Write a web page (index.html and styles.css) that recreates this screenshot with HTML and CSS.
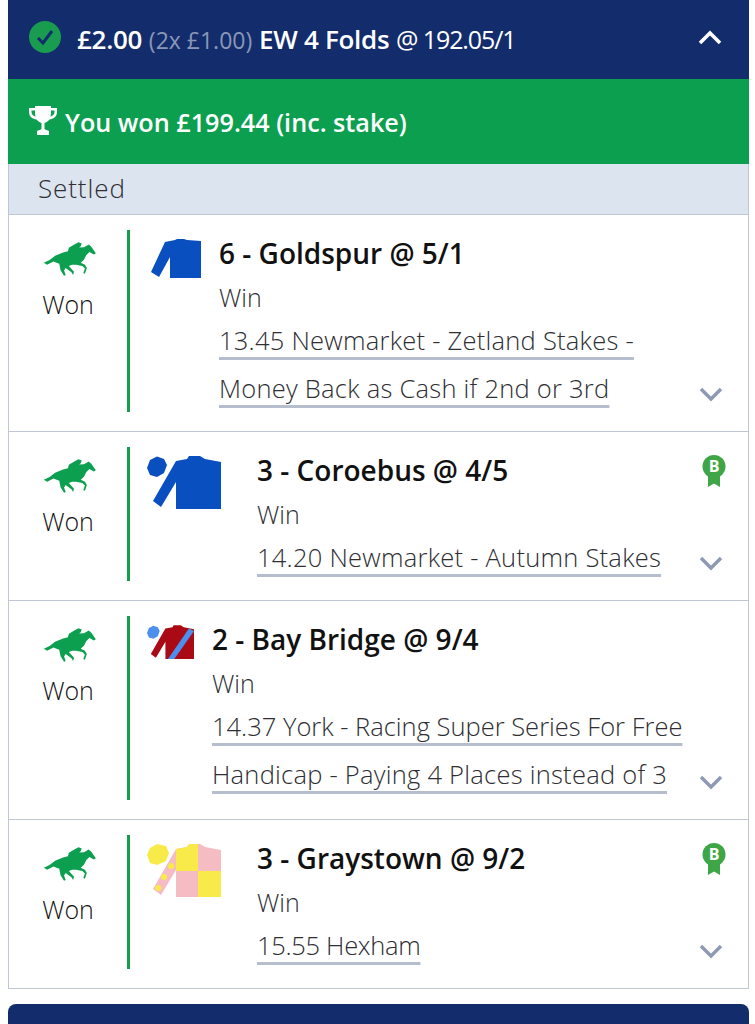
FILE: index.html
```html
<!DOCTYPE html>
<html lang="en">
<head>
<meta charset="utf-8">
<title>EW 4 Folds</title>
<link rel="stylesheet" href="styles.css">
</head>
<body>
<svg class="defs" width="0" height="0" aria-hidden="true">
  <symbol id="horse" viewBox="40 47 163 106">
    <path d="M40 112 L58 103 L75 90 L100 80 L115 76 L118 65 L135 55 L148 48 L158 52 L155 60 L150 64 L165 63 L180 55 L188 62 L202 82 L196 86 L182 78 L172 88 L165 102 L155 112 L168 118 L174 128 L168 146 L163 144 L168 130 L160 122 L140 118 L128 118 L118 122 L134 140 L131 150 L126 141 L108 128 L103 136 L108 150 L103 152 L92 135 L88 115 L70 108 L50 118 Z"/>
  </symbol>
  <symbol id="chev" viewBox="0 0 24 16">
    <path d="M2 3 L12 13 L22 3" fill="none" stroke-width="3.4"/>
  </symbol>
</svg>

<section class="card">
  <header class="head">
    <svg class="tick" viewBox="0 0 32 32"><circle cx="16" cy="16" r="16" class="tick-disc"/><path d="M9 17 L14 22 L23 10" class="tick-mark"/></svg>
    <h1 class="head-text"><b>£2.00</b> <span class="head-sub">(2x £1.00)</span> <b>EW 4 Folds</b> <span class="head-odds">@ 192.05/1</span></h1>
    <svg class="head-chev" viewBox="0 0 24 16"><path d="M2 13 L12 3 L22 13"/></svg>
  </header>
  <div class="won">
    <svg class="trophy" viewBox="0 0 28 29"><path d="M6 0 H22 V2 H28 V6 C28 11 24 13 20.500 13.500 C19 15.500 17 16.500 15.500 17 V23 C17 24 19 24.500 20 25 V29 H8 V25 C9 24.500 11 24 12.500 23 V17 C11 16.500 9 15.500 7.500 13.500 C4 13 0 11 0 6 V2 H6 Z M2.500 4.500 V6 C2.500 8.500 4.500 10 6.500 10.700 C6 9 6 6.500 6 4.500 Z M25.500 4.500 H22 C22 6.500 22 9 21.500 10.700 C23.500 10 25.500 8.500 25.500 6 Z"/></svg>
    <span>You won £199.44 (inc. stake)</span>
  </div>
  <div class="settled">Settled</div>

  <article class="leg">
    <div class="status"><svg class="horse"><use href="#horse"/></svg><span>Won</span></div>
    <div class="rule"></div>
    <div class="silk silk-plain">
      <svg viewBox="0 0 50 39"><path class="blue" d="M14 3 L24 1 L26 0 L33 0 L36 1 L50 2 L50 39 L19 39 L19 18 L8 38 L0 33 Z"/></svg>
    </div>
    <div class="info">
      <h2>6 - Goldspur @ 5/1</h2>
      <p class="market">Win</p>
      <p class="race"><a href="#">13.45 Newmarket - Zetland Stakes - Money Back as Cash if 2nd or 3rd</a></p>
    </div>
    <div class="side"><span></span><svg class="chev"><use href="#chev"/></svg></div>
  </article>

  <article class="leg">
    <div class="status"><svg class="horse"><use href="#horse"/></svg><span>Won</span></div>
    <div class="rule"></div>
    <div class="silk silk-large">
      <svg viewBox="0 0 74 54"><path class="blue" d="M10 0.500 L17 3 L20 9 L17 17 L10 21 L3 19 L0 12 L3 4 Z"/><path class="blue" d="M29 5 L40 3 L42 0 L53 0 L58 3 L74 6 V53 H29 V26 L14 51 L6 45 Z"/></svg>
    </div>
    <div class="info">
      <h2>3 - Coroebus @ 4/5</h2>
      <p class="market">Win</p>
      <p class="race"><a href="#">14.20 Newmarket - Autumn Stakes</a></p>
    </div>
    <div class="side">
      <svg class="badge" viewBox="0 0 24 32"><path d="M6 20 H18 V32 L12 28.500 L6 32 Z"/><circle cx="12" cy="11.500" r="11.500"/><text x="12" y="17" class="badge-letter">B</text></svg>
      <svg class="chev"><use href="#chev"/></svg>
    </div>
  </article>

  <article class="leg">
    <div class="status"><svg class="horse"><use href="#horse"/></svg><span>Won</span></div>
    <div class="rule"></div>
    <div class="silk silk-small">
      <svg viewBox="0 0 74 54"><path class="sky" d="M10 0.500 L17 3 L20 9 L17 17 L10 21 L3 19 L0 12 L3 4 Z"/><path class="maroon" d="M29 5 L40 3 L42 0 L53 0 L58 3 L74 6 V53 H29 V26 L14 51 L6 45 Z"/><path class="sky" d="M66 5 L74 9 L43 53 H33 Z"/></svg>
    </div>
    <div class="info info-tall">
      <h2>2 - Bay Bridge @ 9/4</h2>
      <p class="market">Win</p>
      <p class="race"><a href="#"><span class="tight">14.37 York - Racing Super Series For Free</span> Handicap - Paying 4 Places instead of 3</a></p>
    </div>
    <div class="side"><span></span><svg class="chev"><use href="#chev"/></svg></div>
  </article>

  <article class="leg">
    <div class="status"><svg class="horse"><use href="#horse"/></svg><span>Won</span></div>
    <div class="rule"></div>
    <div class="silk silk-large">
      <svg viewBox="0 0 74 54"><path class="yellow" d="M10 0 L19 2 L22 9 L19 17 L10 21 L3 19 L0 11 L3 4 Z"/><path class="pink" d="M29 5 L40 3 L42 0 L53 0 L58 3 L74 6 V53 H29 V26 L14 51 L6 45 Z"/><path class="yellow" d="M29 5 L40 3 L42 0 L51 0 V27 H29 Z M51 27 H74 V53 H51 Z"/><circle class="yellow" cx="24" cy="22" r="3"/><circle class="yellow" cx="17" cy="33" r="3"/><circle class="yellow" cx="11" cy="44" r="3"/></svg>
    </div>
    <div class="info">
      <h2>3 - Graystown @ 9/2</h2>
      <p class="market">Win</p>
      <p class="race"><a href="#" class="hexham">15.55 Hexham</a></p>
    </div>
    <div class="side">
      <svg class="badge" viewBox="0 0 24 32"><path d="M6 20 H18 V32 L12 28.500 L6 32 Z"/><circle cx="12" cy="11.500" r="11.500"/><text x="12" y="17" class="badge-letter">B</text></svg>
      <svg class="chev"><use href="#chev"/></svg>
    </div>
  </article>
</section>

<div class="next"></div>
</body>
</html>
```
FILE: styles.css
```css
* { box-sizing: border-box; }
html, body { height: 1024px; overflow: hidden; }
body {
  margin: 0 6px 0 8px;
  background: #fff;
  font-family: "Open Sans", "Noto Sans", sans-serif;
  color: #1d1d1f;
}
.defs { position: absolute; }

.head {
  height: 79px;
  padding: 0 27px 2px 21px;
  background: #132c6b;
  color: #fff;
  display: flex;
  align-items: center;
}
.tick { width: 32px; height: 32px; flex: none; margin-top: -4px; }
.tick-disc { fill: #1a9c50; }
.tick-mark { fill: none; stroke: #132c6b; stroke-width: 3; }
.head-text {
  flex: 1;
  margin: 0 0 0 16px;
  font-size: 26px;
  font-weight: 400;
  white-space: nowrap;
}
.head-text b { font-weight: 600; letter-spacing: -0.3px; }
.head-sub { color: #8a97b8; font-size: 23px; }
.head-odds { font-size: 25px; letter-spacing: -1.1px; }
.head-chev { width: 24px; height: 16px; fill: none; stroke: #fff; stroke-width: 3.6; margin-top: -2px; }

.won {
  height: 85px;
  background: #0c9f4f;
  color: #fff;
  display: flex;
  align-items: center;
  gap: 8px;
  padding: 0 21px;
  font-size: 25.2px;
  font-weight: 600;
}
.trophy { width: 28px; height: 29px; fill: #fff; margin-top: -2px; }

.settled {
  height: 51px;
  background: #dce4ef;
  border: 1px solid #c0c7d2;
  border-top: 0;
  padding: 0 0 3px 29px;
  display: flex;
  align-items: center;
  font-size: 26px;
  font-weight: 300;
  letter-spacing: 0.9px;
  color: #2e2e33;
}

.leg {
  display: flex;
  padding: 15px 0 19px;
  border: 1px solid #c0c7d2;
  border-top: 0;
}
.status {
  width: 118px;
  flex: none;
  display: flex;
  flex-direction: column;
  align-items: center;
  padding-top: 12px;
  font-size: 25px;
  font-weight: 300;
  color: #111;
  gap: 12px;
}
.status span { line-height: 33px; }
.horse { width: 54px; height: 34px; fill: #0c9f4f; margin-left: 4px; }
.rule { width: 3px; flex: none; background: #1a9c50; }

.silk { flex: none; margin-left: 17px; padding-top: 9px; }
.silk svg { display: block; }
.silk-plain { width: 72px; padding-left: 4px; }
.silk-plain svg { width: 50px; height: 39px; }
.silk-large { width: 110px; }
.silk-large svg { width: 74px; height: 54px; }
.silk-small { width: 65px; }
.silk-small svg { width: 47px; height: 35px; }
.blue { fill: #0a4fc0; }
.sky { fill: #4c8fec; }
.maroon { fill: #a90a14; }
.yellow { fill: #f8ea48; }
.pink { fill: #f6bcc4; }

.info { flex: 1; min-width: 0; }
.info-tall { padding-bottom: 2px; }
.info h2 {
  margin: 0;
  font-size: 28px;
  line-height: 46px;
  font-weight: 600;
  color: #111;
}
.market {
  margin: 0;
  font-size: 25px;
  line-height: 42px;
  font-weight: 300;
  color: #2e2e33;
}
.race {
  margin: -2px 0 0;
  font-size: 25.5px;
  line-height: 48px;
  font-weight: 300;
  letter-spacing: 0.25px;
  color: #2e2e33;
}
.race a {
  color: inherit;
  text-decoration: underline 3px #b6bdcd;
  text-underline-offset: 7px;
  text-decoration-skip-ink: none;
}
.race .tight { letter-spacing: 0; }
.race .hexham { letter-spacing: -0.3px; }

.side {
  width: 57px;
  flex: none;
  display: flex;
  flex-direction: column;
  justify-content: space-between;
  align-items: flex-start;
  padding: 8px 0 10px 8px;
}
.badge { width: 24px; height: 32px; fill: #3fa648; margin-left: 3px; }
.badge-letter { fill: #fff; font-size: 16px; font-weight: 700; text-anchor: middle; }
.chev { width: 24px; height: 16px; stroke: #8e99b3; }

.next {
  height: 20px;
  margin-top: 15px;
  background: #132c6b;
  border-radius: 8px 8px 0 0;
}
```
